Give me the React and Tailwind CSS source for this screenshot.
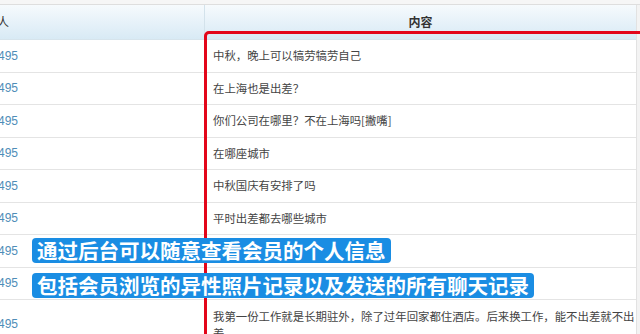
import React from 'react';

const rows = [
    { id: 1, sender: '495', content: '中秋，晚上可以犒劳犒劳自己' },
    { id: 2, sender: '495', content: '在上海也是出差？' },
    { id: 3, sender: '495', content: '你们公司在哪里？不在上海吗[撇嘴]' },
    { id: 4, sender: '495', content: '在哪座城市' },
    { id: 5, sender: '495', content: '中秋国庆有安排了吗' },
    { id: 6, sender: '495', content: '平时出差都去哪些城市' },
    { id: 7, sender: '495', content: '是的' },
    { id: 8, sender: '495', content: '经常出差吗' },
];

const longMessage = '我第一份工作就是长期驻外，除了过年回家都住酒店。后来换工作，能不出差就不出差。';

const cjk = { fontFamily: '"Noto Sans CJK SC", "Noto Sans", sans-serif' };
const latin = { fontFamily: '"Liberation Sans", Arial, sans-serif' };

function App() {
    return (
        <div className="relative w-[640px] h-[334px] overflow-hidden bg-white" style={cjk}>
            <div className="h-[5px] bg-[#f6f6f6] border-b border-[#dedede]" />
            <div className="flex">
                <div className="w-[637px] border-r border-[#e2e2e2]">
                    {/* header */}
                    <div className="flex h-[35px] bg-gradient-to-b from-[#f6fafd] to-[#d8eaf5] border-b border-[#d6e4ec]">
                        <div className="w-[205px] border-r border-[#d3e2eb] flex items-center">
                            <span className="-ml-[3px] text-[12px] text-[#333]">人</span>
                        </div>
                        <div className="flex-1 flex items-center justify-center">
                            <span className="text-[12px] font-bold text-[#333]">内容</span>
                        </div>
                    </div>

                    {rows.map(row => (
                        <div key={row.id} className="flex h-[32.5px] border-b border-[#e4e4e4]">
                            <div className="w-[206px] flex items-center">
                                <span className="-ml-[2px] text-[12px] text-[#4f8db8]" style={latin}>{row.sender}</span>
                            </div>
                            <div className="flex-1 flex items-center pl-[7px] text-[11.4px] text-[#444]">
                                {row.content}
                            </div>
                        </div>
                    ))}

                    <div className="flex h-[48px]">
                        <div className="w-[206px] flex items-center">
                            <span className="-ml-[2px] text-[12px] text-[#4f8db8]" style={latin}>495</span>
                        </div>
                        <div className="flex-1 pl-[7px] pt-[8px] text-[11.4px] leading-[17px] text-[#444]">
                            {longMessage}
                        </div>
                    </div>
                </div>
                <div className="flex-1 bg-[#f3f3f3]" />
            </div>

            {/* red annotation frame */}
            <div className="absolute left-[204px] top-[31px] w-[460px] h-[340px] border-[3px] border-[#e3061a] rounded-tl-[5px]" />

            {/* subtitles */}
            <div className="absolute left-[32px] top-[238px] flex flex-col items-start gap-[10px]">
                <div className="h-[25px] px-[5px] rounded-[4px] bg-[#1a8de3] text-white font-bold text-[20.5px] leading-[25px]">
                    通过后台可以随意查看会员的个人信息
                </div>
                <div className="h-[25px] px-[5px] rounded-[4px] bg-[#1a8de3] text-white font-bold text-[20.5px] leading-[25px]">
                    包括会员浏览的异性照片记录以及发送的所有聊天记录
                </div>
            </div>
        </div>
    );
}

export default App;
